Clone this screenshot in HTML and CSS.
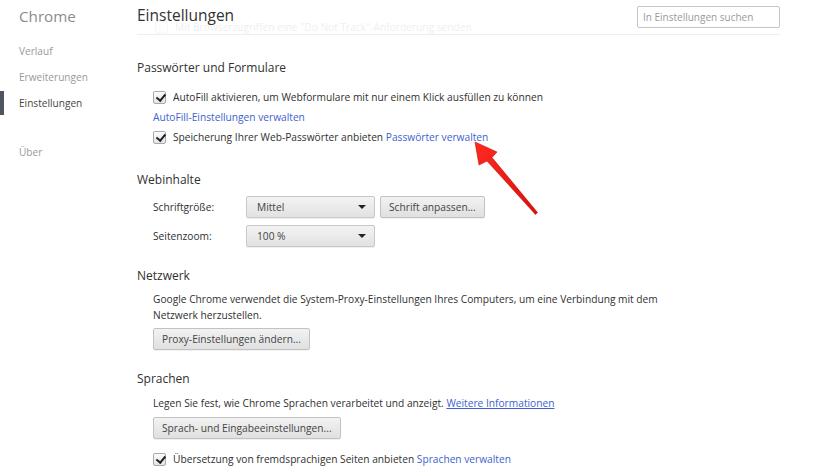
FILE: index.html
```html
<!DOCTYPE html>
<html lang="de">
<head>
<meta charset="utf-8">
<title>Einstellungen</title>
<link rel="stylesheet" href="styles.css">
</head>
<body>
<div class="page">
  <nav class="sidebar">
    <div class="brand">Chrome</div>
    <ul class="nav">
      <li class="nav-item">Verlauf</li>
      <li class="nav-item">Erweiterungen</li>
      <li class="nav-item active">Einstellungen</li>
      <li class="nav-item gap">Über</li>
    </ul>
  </nav>
  <main class="main">
    <header class="header">
      <h1 class="title">Einstellungen</h1>
      <div class="ghost-row"><span class="cb ghost-cb"></span>Mit Browserzugriffen eine "Do Not Track"-Anforderung senden</div>
      <div class="search">In Einstellungen suchen</div>
    </header>

    <section class="section s-pass">
      <h3 class="sec-title">Passwörter und Formulare</h3>
      <div class="row check-row"><span class="cb checked"></span>AutoFill aktivieren, um Webformulare mit nur einem Klick ausfüllen zu können</div>
      <div class="row"><a class="link">AutoFill-Einstellungen verwalten</a></div>
      <div class="row check-row"><span class="cb checked"></span>Speicherung Ihrer Web-Passwörter anbieten&nbsp;<a class="link">Passwörter verwalten</a></div>
    </section>

    <section class="section s-web">
      <h3 class="sec-title">Webinhalte</h3>
      <div class="form-row">
        <span class="label">Schriftgröße:</span>
        <div class="select">Mittel<span class="caret"></span></div>
        <div class="btn">Schrift anpassen...</div>
      </div>
      <div class="form-row">
        <span class="label">Seitenzoom:</span>
        <div class="select">100 %<span class="caret"></span></div>
      </div>
    </section>

    <section class="section s-net">
      <h3 class="sec-title">Netzwerk</h3>
      <p class="para">Google Chrome verwendet die System-Proxy-Einstellungen Ihres Computers, um eine Verbindung mit dem Netzwerk herzustellen.</p>
      <div class="btn">Proxy-Einstellungen ändern...</div>
    </section>

    <section class="section s-lang">
      <h3 class="sec-title">Sprachen</h3>
      <p class="para">Legen Sie fest, wie Chrome Sprachen verarbeitet und anzeigt. <a class="link underline">Weitere Informationen</a></p>
      <div class="btn">Sprach- und Eingabeeinstellungen...</div>
      <div class="row check-row last"><span class="cb checked"></span>Übersetzung von fremdsprachigen Seiten anbieten&nbsp;<a class="link">Sprachen verwalten</a></div>
    </section>

    <svg class="arrow" width="72" height="80" viewBox="0 0 72 80" aria-hidden="true">
      <defs>
        <linearGradient id="ag" x1="0" y1="0" x2="1" y2="1">
          <stop offset="0" stop-color="#ff2a22"/>
          <stop offset="1" stop-color="#d8110e"/>
        </linearGradient>
      </defs>
      <polygon points="5,4 27,14 22,19.5 67.5,74.5 65.5,76.5 17,23 9,27" fill="url(#ag)" stroke="#c80f0c" stroke-width="0.6" stroke-linejoin="round"/>
    </svg>
  </main>
</div>
</body>
</html>
```
FILE: styles.css
```css
* { box-sizing: border-box; }
html, body { margin: 0; padding: 0; background: #fff; }
body {
  font-family: "Segoe UI", "Open Sans", "Noto Sans", sans-serif;
  font-size: 10.2px;
  color: #303030;
  width: 832px;
  height: 468px;
  overflow: hidden;
}
.page { display: flex; height: 468px; }

.sidebar { width: 137px; flex: none; }
.brand {
  font-size: 15.2px;
  color: #8c8c8c;
  padding-left: 19px;
  line-height: 32px;
  font-weight: 400;
}
.nav { list-style: none; margin: 6px 0 0; padding: 0; }
.nav-item {
  height: 26px;
  line-height: 26px;
  padding-left: 19px;
  color: #999;
  font-size: 10.1px;
}
.nav-item.active {
  color: #464646;
  border-left: 4px solid #4d5561;
  padding-left: 15px;
  height: 24px;
  line-height: 24px;
  margin: 1px 0;
}
.nav-item.gap { margin-top: 24px; }

.main { position: relative; flex: 1; padding-right: 52px; }
.header {
  position: relative;
  height: 35px;
  border-bottom: 1px solid #eeeeee;
  display: flex;
  align-items: flex-start;
  justify-content: space-between;
}
.title {
  position: relative;
  z-index: 1;
  margin: 0;
  font-size: 15.5px;
  font-weight: 400;
  color: #333;
  line-height: 30px;
}
.ghost-row {
  position: absolute;
  left: 18px;
  top: 20px;
  height: 14px;
  overflow: hidden;
  display: flex;
  align-items: center;
  color: #303030;
  opacity: 0.08;
  white-space: nowrap;
}
.ghost-cb { margin-right: 7px; }
.search {
  margin-top: 6px;
  width: 143px;
  height: 22px;
  border: 1px solid #c5c5c5;
  border-radius: 2px;
  color: #9a9a9a;
  font-size: 10px;
  line-height: 20px;
  padding-left: 5px;
  white-space: nowrap;
}

.section { padding-left: 16px; }
.sec-title {
  margin: 0 0 0 -16px;
  font-size: 12px;
  font-weight: 400;
  color: #303030;
  line-height: 18px;
}
.s-pass { margin-top: 24px; }
.s-pass .sec-title { margin-bottom: 10px; }
.s-web { margin-top: 24px; }
.s-net, .s-lang { margin-top: 20px; }

.row {
  height: 20px;
  line-height: 20px;
  display: flex;
  align-items: center;
  white-space: nowrap;
}

.cb {
  display: inline-block;
  flex: none;
  width: 13px;
  height: 13px;
  border: 1px solid #a9a9a9;
  border-radius: 2px;
  background: linear-gradient(#fcfcfc, #e4e4e4);
  margin-right: 7px;
  position: relative;
}
.cb.checked::after {
  content: "";
  position: absolute;
  left: 3.5px;
  top: 0.5px;
  width: 3.5px;
  height: 7px;
  border: solid #222;
  border-width: 0 2px 2px 0;
  transform: rotate(40deg);
}

.link { color: #3e5fd0; text-decoration: none; cursor: pointer; }
.link.underline { text-decoration: underline; }

.form-row {
  display: flex;
  align-items: center;
  margin-top: 7px;
  height: 22px;
}
.label { width: 93px; color: #303030; }
.select {
  position: relative;
  width: 129px;
  height: 22px;
  line-height: 20px;
  padding-left: 10px;
  border: 1px solid #c8c8c8;
  border-radius: 2px;
  background: linear-gradient(#f3f3f3, #e2e2e2);
  color: #444;
  box-shadow: 0 1px 0 rgba(0,0,0,0.06);
}
.caret {
  position: absolute;
  right: 8px;
  top: 8px;
  width: 0; height: 0;
  border-left: 4px solid transparent;
  border-right: 4px solid transparent;
  border-top: 4px solid #222;
}
.btn {
  display: inline-block;
  height: 22px;
  line-height: 20px;
  padding: 0 8px;
  border: 1px solid #c2c2c2;
  border-radius: 2px;
  background: linear-gradient(#f2f2f2, #e0e0e0);
  color: #444;
  white-space: nowrap;
  box-shadow: 0 1px 0 rgba(0,0,0,0.06);
}
.form-row .btn { margin-left: 5px; }

.para {
  margin: 6px 0 5px;
  line-height: 16px;
  width: 520px;
}
.s-lang .para { margin: 7px 0 6px; }
.row.last { margin-top: 10px; }

.arrow {
  position: absolute;
  left: 333px;
  top: 138px;
}
```
